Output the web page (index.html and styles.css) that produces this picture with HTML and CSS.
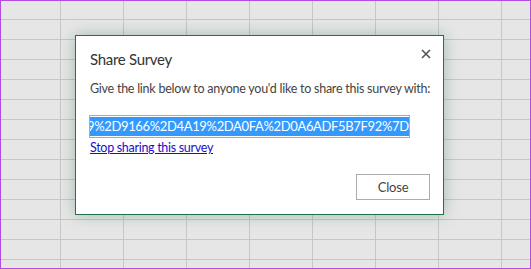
FILE: index.html
```html
<!DOCTYPE html>
<html lang="en">
<head>
    <meta charset="UTF-8">
    <meta name="viewport" content="width=device-width, initial-scale=1.0">
    <title>Share Survey</title>
    <link rel="stylesheet" href="styles.css">
</head>
<body>
    <div class="sheet">
        <div class="dialog">
            <div class="dialog-head">
                <h2 class="dialog-title">Share Survey</h2>
                <button class="dialog-x" aria-label="Close">
                    <svg width="10" height="10" viewBox="0 0 10 10"><path d="M1 1L9 9M9 1L1 9" stroke="#555" stroke-width="1.6" fill="none"/></svg>
                </button>
            </div>
            <p class="dialog-text">Give the link below to anyone you'd like to share this survey with:</p>
            <div class="link-box"><span class="link-sel">9%2D9166%2D4A19%2DA0FA%2D0A6ADF5B7F92%7D</span></div>
            <a class="stop-link" href="#">Stop sharing this survey</a>
            <div class="dialog-foot">
                <button class="btn">Close</button>
            </div>
        </div>
    </div>
</body>
</html>
```

FILE: styles.css
```css
html, body { margin: 0; padding: 0; }
body { font-family: Lato, "Open Sans", Arial, sans-serif; color: #333; }

.sheet {
    position: relative;
    width: 531px; height: 269px;
    box-sizing: border-box;
    border: 1px solid #b24de0;
    background-color: #e6e6e6;
    background-image:
        linear-gradient(to right, transparent 62px, #c6c6c6 62px),
        linear-gradient(to bottom, transparent 19px, #c6c6c6 19px);
    background-size: 63px 100%, 100% 20px;
    background-position: -2px 0, 0 0;
    background-origin: border-box;
    overflow: hidden;
}

.dialog {
    position: absolute;
    left: 74px; top: 34px;
    width: 369px; height: 180px;
    box-sizing: border-box;
    border: 1px solid #217346;
    background: #fff;
    box-shadow: 0 0 14px rgba(33, 115, 70, 0.35);
    padding: 12px 13px 14px 14px;
    display: flex; flex-direction: column;
}

.dialog-head { display: flex; justify-content: space-between; align-items: flex-start; }
.dialog-title { margin: 0; font-size: 15px; letter-spacing: -0.3px; font-weight: normal; line-height: 22px; color: #333; }
.dialog-x { border: 0; background: none; padding: 0; margin: 1px -1px 0 0; width: 10px; height: 10px; display: flex; }

.dialog-text { margin: 10px 0 0 0; font-size: 12.5px; letter-spacing: -0.25px; line-height: 18px; color: #444; white-space: nowrap; }

.link-box {
    margin: 17px 0 0 -1px;
    width: 321px; height: 23px;
    box-sizing: border-box;
    border: 1px solid #7fb3ea;
    padding: 1px;
    overflow: hidden;
    white-space: nowrap;
    display: flex;
}
.link-sel {
    flex: none;
    height: 19px; line-height: 19px;
    background: #3399ff; color: #fff;
    font-size: 13px;
    letter-spacing: -0.35px;
    margin-left: -4px;
    padding-right: 20px;
}

.stop-link { margin-top: 2px; font-size: 12.5px; letter-spacing: -0.3px; line-height: 15px; color: #1a0dcc; align-self: flex-start; }

.dialog-foot { margin-top: auto; display: flex; justify-content: flex-end; }
.btn {
    width: 74px; height: 26px;
    border: 1px solid #ababab; background: #fff;
    font-family: inherit; font-size: 13px; letter-spacing: -0.2px; color: #444;
    padding: 0;
}
```
